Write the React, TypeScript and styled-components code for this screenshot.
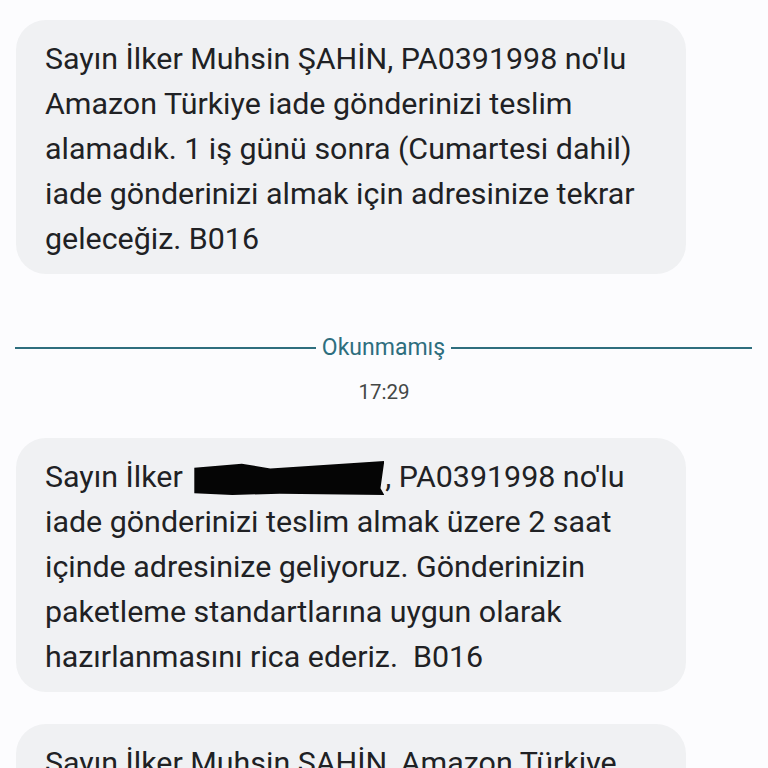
import styled, { createGlobalStyle } from 'styled-components';

const GlobalStyle = createGlobalStyle`
  html, body {
    margin: 0;
    padding: 0;
    background: #fcfcfe;
  }
  body {
    font-family: Roboto, 'Noto Sans', sans-serif;
    color: #1f1f1f;
  }
`;

const Thread = styled.div`
  display: flex;
  flex-direction: column;
  align-items: flex-start;
  padding: 20px 16px 0;
  height: 768px;
  overflow: hidden;
  box-sizing: border-box;
`;

const Bubble = styled.div`
  width: 670px;
  box-sizing: border-box;
  padding: 16px 16px 13px 29px;
  background: #f0f1f3;
  border-radius: 30px;
  font-size: 30.4px;
  line-height: 45px;
  color: #202124;
  white-space: nowrap;
  & + & {
    margin-top: 32px;
  }
`;

const Redacted = styled.span`
  display: inline-block;
  width: 190px;
  height: 34px;
  margin: 0 1px 0 4px;
  vertical-align: -8px;
  background: #050505;
  clip-path: polygon(0 20%, 25% 8%, 40% 22%, 100% 0, 98% 80%, 100% 100%, 45% 96%, 20% 100%, 0 95%);
`;

const Divider = styled.div`
  align-self: stretch;
  display: flex;
  align-items: center;
  gap: 6px;
  margin: 60px 0 0 -1px;
  color: #2e6e7e;
  font-size: 23px;
  line-height: 28px;
`;

const Rule = styled.div`
  flex: 1;
  height: 2px;
  background: #2e6e7e;
`;

const Time = styled.div`
  align-self: stretch;
  text-align: center;
  margin: 17px 0 33px;
  font-size: 20.5px;
  line-height: 26px;
  color: #444746;
`;

export default function App() {
  return (
    <>
      <GlobalStyle />
      <Thread>
        <Bubble>
          Sayın İlker Muhsin ŞAHİN, PA0391998 no'lu
          <br />
          Amazon Türkiye iade gönderinizi teslim
          <br />
          alamadık. 1 iş günü sonra (Cumartesi dahil)
          <br />
          iade gönderinizi almak için adresinize tekrar
          <br />
          geleceğiz. B016
        </Bubble>
        <Divider>
          <Rule />
          Okunmamış
          <Rule />
        </Divider>
        <Time>17:29</Time>
        <Bubble>
          Sayın İlker <Redacted />, PA0391998 no'lu
          <br />
          iade gönderinizi teslim almak üzere 2 saat
          <br />
          içinde adresinize geliyoruz. Gönderinizin
          <br />
          paketleme standartlarına uygun olarak
          <br />
          hazırlanmasını rica ederiz.&nbsp; B016
        </Bubble>
        <Bubble>
          Sayın İlker Muhsin ŞAHİN, Amazon Türkiye
          <br />
          iade gönderinizi teslim almak üzere
        </Bubble>
      </Thread>
    </>
  );
}
